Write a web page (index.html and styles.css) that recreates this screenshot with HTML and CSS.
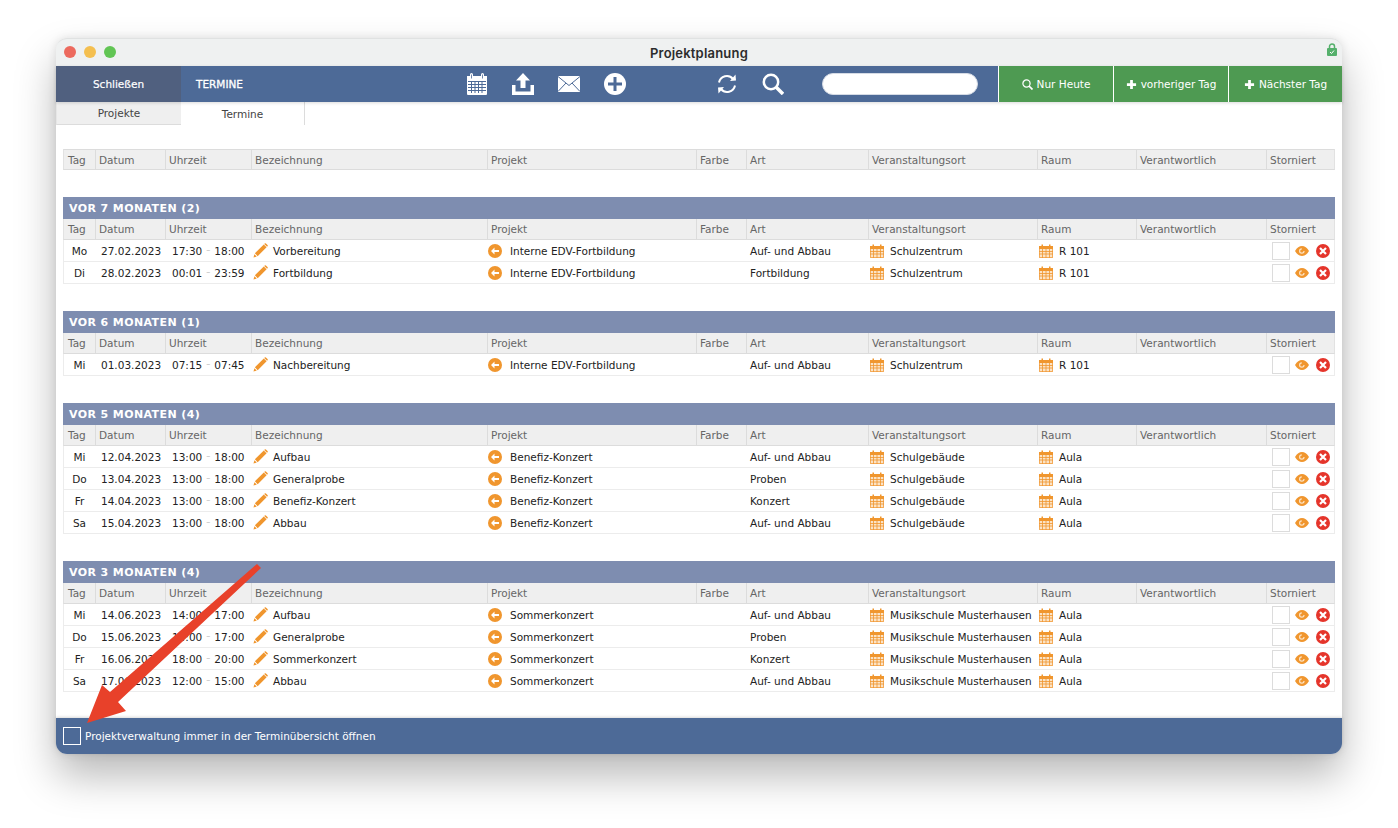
FILE: index.html
```html
<!DOCTYPE html>
<html lang="de">
<head>
<meta charset="utf-8">
<title>Projektplanung</title>
<link rel="stylesheet" href="styles.css">
</head>
<body>
<svg class="defs" width="0" height="0" aria-hidden="true">
  <symbol id="i-cal" viewBox="0 0 22 22">
    <path fill="currentColor" d="M1 3h3V1.5a1.5 1.5 0 0 1 3 0V3h8V1.500a1.500 1.500 0 0 1 3 0V3h3v18a1 1 0 0 1-1 1H2a1 1 0 0 1-1-1z"/>
    <path fill="none" stroke="#4d6a97" d="M5.500 1.500v4M16.500 1.500v4" stroke-width=".8"/>
    <path fill="none" stroke="#4d6a97" stroke-width="1" d="M2 8.500h18M2 11.500h18M2 14.500h18M2 17.500h18M5.500 8v12M9 8v12M12.500 8v12M16 8v12"/>
  </symbol>
  <symbol id="i-upload" viewBox="0 0 22 22">
    <path fill="#fff" d="M11 0l7 7.500h-4.500V15h-5V7.500H4zM0 12h3.500v6.500h15V12H22v10H0z"/>
  </symbol>
  <symbol id="i-mail" viewBox="0 0 22 16">
    <path fill="#fff" d="M0 0h22v16H0z"/>
    <path fill="none" stroke="#4d6a97" d="M0 .5l11 9 11-9M0 15.500l8-8.500M22 15.500l-8-8.500"/>
  </symbol>
  <symbol id="i-plus" viewBox="0 0 22 22">
    <circle cx="11" cy="11" r="11" fill="#fff"/>
    <path fill="none" stroke="#4d6a97" stroke-width="3" d="M11 4v14M4 11h14"/>
  </symbol>
  <symbol id="i-sync" viewBox="0 0 22 22">
    <path fill="none" stroke="#fff" stroke-width="2" d="M3 9.500a8 8 0 0 1 14-3.500M19 12.500a8 8 0 0 1-14 3.500"/>
    <path fill="#fff" d="M14 8l6-.5L19.500 1.500zM8 14l-6 .5.5 6z"/>
  </symbol>
  <symbol id="i-search" viewBox="0 0 22 22">
    <circle cx="9" cy="9" r="7.200" fill="none" stroke="currentColor" stroke-width="2.500"/>
    <path stroke="currentColor" stroke-width="3.500" d="M14 14l7 7"/>
  </symbol>
  <symbol id="i-cross" viewBox="0 0 12 12">
    <path fill="none" stroke="#fff" stroke-width="3" d="M6 1v10M1 6h10"/>
  </symbol>
  <symbol id="i-pen" viewBox="0 0 16 16">
    <path fill="#f0962e" d="M11.500 1.500l3 3L5 14l-3-3zM12.500.5a1 1 0 0 1 1.300 0l1.700 1.700a1 1 0 0 1 0 1.300l-.5.500-3-3zM1.500 12l2.500 2.500-3.500 1z"/>
  </symbol>
  <symbol id="i-back" viewBox="0 0 14 14">
    <circle cx="7" cy="7" r="7" fill="#f0962e"/>
    <path fill="#fff" d="M3 7l3.500-3.500V6H11v2H6.500v2.500z"/>
  </symbol>
  <symbol id="i-ocal" viewBox="0 0 14 14">
    <path fill="#fbe3c6" d="M0 3h14v11H0z"/>
    <path fill="#f0962e" d="M0 2h2.500V.5h1.500V2h6V.5h1.500V2H14v3H0z"/>
    <path fill="none" stroke="#f0962e" stroke-width=".8" d="M.4 5v8.600h13.200V5M0 7.500h14M0 10h14M3.500 5v9M7 5v9M10.500 5v9"/>
  </symbol>
  <symbol id="i-eye" viewBox="0 0 14 10">
    <path fill="#f0962e" d="M0 5c2-3.300 4.300-5 7-5s5 1.700 7 5c-2 3.300-4.300 5-7 5S2 8.300 0 5z"/>
    <path fill="none" stroke="#fbe3c6" stroke-width="1.200" d="M9 5a2.200 2.200 0 1 1-2.200-2.200"/>
  </symbol>
  <symbol id="i-x" viewBox="0 0 14 14">
    <circle cx="7" cy="7" r="7" fill="#e5352b"/>
    <path fill="none" stroke="#fff" stroke-width="2.200" d="M4 4l6 6M10 4l-6 6"/>
  </symbol>
</svg>

<div class="window">
  <header class="titlebar">
    <span class="lights"><i class="light red"></i><i class="light yellow"></i><i class="light green"></i></span>
    <span class="wintitle">Projektplanung</span>
    <svg class="lock" viewBox="0 0 10 13"><path fill="none" stroke="#55b06c" stroke-width="1.500" d="M2.500 6V3.500a2.500 2.500 0 0 1 5 0V6"/><rect y="5" width="10" height="8" rx="1" fill="#55b06c"/><path fill="none" stroke="#fff" d="M3 9l1.500 1.500L7 7.500"/></svg>
  </header>

  <nav class="toolbar">
    <a class="close-btn">Schließen</a>
    <span class="section">TERMINE</span>
    <span class="tools tools-a">
      <svg class="ti white"><use href="#i-cal"/></svg>
      <svg class="ti"><use href="#i-upload"/></svg>
      <svg class="ti"><use href="#i-mail"/></svg>
      <svg class="ti"><use href="#i-plus"/></svg>
    </span>
    <span class="tools tools-b">
      <svg class="ti"><use href="#i-sync"/></svg>
      <svg class="ti white"><use href="#i-search"/></svg>
    </span>
    <input class="search" type="text" aria-label="Suche">
    <span class="gbtns">
      <a class="gbtn g1"><svg class="gi"><use href="#i-search"/></svg>Nur Heute</a>
      <a class="gbtn g2"><svg class="gi"><use href="#i-cross"/></svg>vorheriger Tag</a>
      <a class="gbtn g3"><svg class="gi"><use href="#i-cross"/></svg>Nächster Tag</a>
    </span>
  </nav>

  <div class="tabs">
    <a class="tab off">Projekte</a>
    <a class="tab on">Termine</a>
  </div>

  <main class="content">
    <div class="row head top"><span>Tag</span><span>Datum</span><span>Uhrzeit</span><span>Bezeichnung</span><span>Projekt</span><span>Farbe</span><span>Art</span><span>Veranstaltungsort</span><span>Raum</span><span>Verantwortlich</span><span>Storniert</span></div>

    <section class="group">
      <h2 class="gtitle">VOR 7 MONATEN (2)</h2>
      <div class="row head"><span>Tag</span><span>Datum</span><span>Uhrzeit</span><span>Bezeichnung</span><span>Projekt</span><span>Farbe</span><span>Art</span><span>Veranstaltungsort</span><span>Raum</span><span>Verantwortlich</span><span>Storniert</span></div>
      <div class="row item"><span class="c-day">Mo</span><span class="c-date">27.02.2023</span><span class="c-time">17:30<em>–</em>18:00</span><span class="c-ic"><svg class="pen"><use href="#i-pen"/></svg>Vorbereitung</span><span class="c-proj"><svg class="back"><use href="#i-back"/></svg>Interne EDV-Fortbildung</span><span></span><span>Auf- und Abbau</span><span class="c-cal"><svg class="ocal"><use href="#i-ocal"/></svg>Schulzentrum</span><span class="c-cal"><svg class="ocal"><use href="#i-ocal"/></svg>R 101</span><span></span><span class="c-act"><i class="box"></i><svg class="eye"><use href="#i-eye"/></svg><svg class="x"><use href="#i-x"/></svg></span></div>
      <div class="row item"><span class="c-day">Di</span><span class="c-date">28.02.2023</span><span class="c-time">00:01<em>–</em>23:59</span><span class="c-ic"><svg class="pen"><use href="#i-pen"/></svg>Fortbildung</span><span class="c-proj"><svg class="back"><use href="#i-back"/></svg>Interne EDV-Fortbildung</span><span></span><span>Fortbildung</span><span class="c-cal"><svg class="ocal"><use href="#i-ocal"/></svg>Schulzentrum</span><span class="c-cal"><svg class="ocal"><use href="#i-ocal"/></svg>R 101</span><span></span><span class="c-act"><i class="box"></i><svg class="eye"><use href="#i-eye"/></svg><svg class="x"><use href="#i-x"/></svg></span></div>
    </section>

    <section class="group">
      <h2 class="gtitle">VOR 6 MONATEN (1)</h2>
      <div class="row head"><span>Tag</span><span>Datum</span><span>Uhrzeit</span><span>Bezeichnung</span><span>Projekt</span><span>Farbe</span><span>Art</span><span>Veranstaltungsort</span><span>Raum</span><span>Verantwortlich</span><span>Storniert</span></div>
      <div class="row item"><span class="c-day">Mi</span><span class="c-date">01.03.2023</span><span class="c-time">07:15<em>–</em>07:45</span><span class="c-ic"><svg class="pen"><use href="#i-pen"/></svg>Nachbereitung</span><span class="c-proj"><svg class="back"><use href="#i-back"/></svg>Interne EDV-Fortbildung</span><span></span><span>Auf- und Abbau</span><span class="c-cal"><svg class="ocal"><use href="#i-ocal"/></svg>Schulzentrum</span><span class="c-cal"><svg class="ocal"><use href="#i-ocal"/></svg>R 101</span><span></span><span class="c-act"><i class="box"></i><svg class="eye"><use href="#i-eye"/></svg><svg class="x"><use href="#i-x"/></svg></span></div>
    </section>

    <section class="group">
      <h2 class="gtitle">VOR 5 MONATEN (4)</h2>
      <div class="row head"><span>Tag</span><span>Datum</span><span>Uhrzeit</span><span>Bezeichnung</span><span>Projekt</span><span>Farbe</span><span>Art</span><span>Veranstaltungsort</span><span>Raum</span><span>Verantwortlich</span><span>Storniert</span></div>
      <div class="row item"><span class="c-day">Mi</span><span class="c-date">12.04.2023</span><span class="c-time">13:00<em>–</em>18:00</span><span class="c-ic"><svg class="pen"><use href="#i-pen"/></svg>Aufbau</span><span class="c-proj"><svg class="back"><use href="#i-back"/></svg>Benefiz-Konzert</span><span></span><span>Auf- und Abbau</span><span class="c-cal"><svg class="ocal"><use href="#i-ocal"/></svg>Schulgebäude</span><span class="c-cal"><svg class="ocal"><use href="#i-ocal"/></svg>Aula</span><span></span><span class="c-act"><i class="box"></i><svg class="eye"><use href="#i-eye"/></svg><svg class="x"><use href="#i-x"/></svg></span></div>
      <div class="row item"><span class="c-day">Do</span><span class="c-date">13.04.2023</span><span class="c-time">13:00<em>–</em>18:00</span><span class="c-ic"><svg class="pen"><use href="#i-pen"/></svg>Generalprobe</span><span class="c-proj"><svg class="back"><use href="#i-back"/></svg>Benefiz-Konzert</span><span></span><span>Proben</span><span class="c-cal"><svg class="ocal"><use href="#i-ocal"/></svg>Schulgebäude</span><span class="c-cal"><svg class="ocal"><use href="#i-ocal"/></svg>Aula</span><span></span><span class="c-act"><i class="box"></i><svg class="eye"><use href="#i-eye"/></svg><svg class="x"><use href="#i-x"/></svg></span></div>
      <div class="row item"><span class="c-day">Fr</span><span class="c-date">14.04.2023</span><span class="c-time">13:00<em>–</em>18:00</span><span class="c-ic"><svg class="pen"><use href="#i-pen"/></svg>Benefiz-Konzert</span><span class="c-proj"><svg class="back"><use href="#i-back"/></svg>Benefiz-Konzert</span><span></span><span>Konzert</span><span class="c-cal"><svg class="ocal"><use href="#i-ocal"/></svg>Schulgebäude</span><span class="c-cal"><svg class="ocal"><use href="#i-ocal"/></svg>Aula</span><span></span><span class="c-act"><i class="box"></i><svg class="eye"><use href="#i-eye"/></svg><svg class="x"><use href="#i-x"/></svg></span></div>
      <div class="row item"><span class="c-day">Sa</span><span class="c-date">15.04.2023</span><span class="c-time">13:00<em>–</em>18:00</span><span class="c-ic"><svg class="pen"><use href="#i-pen"/></svg>Abbau</span><span class="c-proj"><svg class="back"><use href="#i-back"/></svg>Benefiz-Konzert</span><span></span><span>Auf- und Abbau</span><span class="c-cal"><svg class="ocal"><use href="#i-ocal"/></svg>Schulgebäude</span><span class="c-cal"><svg class="ocal"><use href="#i-ocal"/></svg>Aula</span><span></span><span class="c-act"><i class="box"></i><svg class="eye"><use href="#i-eye"/></svg><svg class="x"><use href="#i-x"/></svg></span></div>
    </section>

    <section class="group">
      <h2 class="gtitle">VOR 3 MONATEN (4)</h2>
      <div class="row head"><span>Tag</span><span>Datum</span><span>Uhrzeit</span><span>Bezeichnung</span><span>Projekt</span><span>Farbe</span><span>Art</span><span>Veranstaltungsort</span><span>Raum</span><span>Verantwortlich</span><span>Storniert</span></div>
      <div class="row item"><span class="c-day">Mi</span><span class="c-date">14.06.2023</span><span class="c-time">14:00<em>–</em>17:00</span><span class="c-ic"><svg class="pen"><use href="#i-pen"/></svg>Aufbau</span><span class="c-proj"><svg class="back"><use href="#i-back"/></svg>Sommerkonzert</span><span></span><span>Auf- und Abbau</span><span class="c-cal"><svg class="ocal"><use href="#i-ocal"/></svg>Musikschule Musterhausen</span><span class="c-cal"><svg class="ocal"><use href="#i-ocal"/></svg>Aula</span><span></span><span class="c-act"><i class="box"></i><svg class="eye"><use href="#i-eye"/></svg><svg class="x"><use href="#i-x"/></svg></span></div>
      <div class="row item"><span class="c-day">Do</span><span class="c-date">15.06.2023</span><span class="c-time">14:00<em>–</em>17:00</span><span class="c-ic"><svg class="pen"><use href="#i-pen"/></svg>Generalprobe</span><span class="c-proj"><svg class="back"><use href="#i-back"/></svg>Sommerkonzert</span><span></span><span>Proben</span><span class="c-cal"><svg class="ocal"><use href="#i-ocal"/></svg>Musikschule Musterhausen</span><span class="c-cal"><svg class="ocal"><use href="#i-ocal"/></svg>Aula</span><span></span><span class="c-act"><i class="box"></i><svg class="eye"><use href="#i-eye"/></svg><svg class="x"><use href="#i-x"/></svg></span></div>
      <div class="row item"><span class="c-day">Fr</span><span class="c-date">16.06.2023</span><span class="c-time">18:00<em>–</em>20:00</span><span class="c-ic"><svg class="pen"><use href="#i-pen"/></svg>Sommerkonzert</span><span class="c-proj"><svg class="back"><use href="#i-back"/></svg>Sommerkonzert</span><span></span><span>Konzert</span><span class="c-cal"><svg class="ocal"><use href="#i-ocal"/></svg>Musikschule Musterhausen</span><span class="c-cal"><svg class="ocal"><use href="#i-ocal"/></svg>Aula</span><span></span><span class="c-act"><i class="box"></i><svg class="eye"><use href="#i-eye"/></svg><svg class="x"><use href="#i-x"/></svg></span></div>
      <div class="row item"><span class="c-day">Sa</span><span class="c-date">17.06.2023</span><span class="c-time">12:00<em>–</em>15:00</span><span class="c-ic"><svg class="pen"><use href="#i-pen"/></svg>Abbau</span><span class="c-proj"><svg class="back"><use href="#i-back"/></svg>Sommerkonzert</span><span></span><span>Auf- und Abbau</span><span class="c-cal"><svg class="ocal"><use href="#i-ocal"/></svg>Musikschule Musterhausen</span><span class="c-cal"><svg class="ocal"><use href="#i-ocal"/></svg>Aula</span><span></span><span class="c-act"><i class="box"></i><svg class="eye"><use href="#i-eye"/></svg><svg class="x"><use href="#i-x"/></svg></span></div>
    </section>
  </main>

  <footer class="footer">
    <i class="fbox"></i>
    <span class="ftext">Projektverwaltung immer in der Terminübersicht öffnen</span>
  </footer>
</div>

<svg class="arrow" viewBox="0 0 1398 828" aria-hidden="true">
  <polygon points="257,564 261,568 118,702 126,711 87,723 102,685 110,692" fill="#e8412a"/>
</svg>
</body>
</html>
```

FILE: styles.css
```css
* { box-sizing: border-box; }
html, body { margin: 0; height: 100%; }
body {
  background: #fff;
  font-family: "DejaVu Sans", "Liberation Sans", sans-serif;
  font-size: 10.5px;
  color: #222;
  overflow: hidden;
  position: relative;
}
.defs { position: absolute; }
.window {
  position: absolute;
  left: 56px;
  top: 38px;
  width: 1286px;
  height: 716px;
  display: flex;
  flex-direction: column;
  border-radius: 11px;
  background: #fff;
  box-shadow: 0 22px 42px rgba(0, 0, 0, .28), 0 0 10px rgba(0, 0, 0, .1);
}

/* title bar */
.titlebar {
  height: 28px;
  flex: none;
  display: flex;
  align-items: center;
  justify-content: center;
  position: relative;
  background: #eff1f1;
  border-radius: 11px 11px 0 0;
  border-top: 1px solid #e0e2e2;
}
.lights { position: absolute; left: 8px; top: 7px; display: flex; gap: 8px; }
.light { width: 12px; height: 12px; border-radius: 50%; display: block; }
.light.red { background: #ec6a5e; }
.light.yellow { background: #f4bf4f; }
.light.green { background: #61c554; }
.wintitle {
  font-family: Inter, "Liberation Sans", sans-serif;
  font-size: 13px;
  font-weight: 600;
  color: #2c2c2c;
  letter-spacing: .2px;
}
.lock { position: absolute; right: 5px; top: 4px; width: 10px; height: 13px; }

/* toolbar */
.toolbar {
  height: 36px;
  flex: none;
  display: flex;
  align-items: center;
  background: #4d6a97;
  color: #fff;
  position: relative;
  box-shadow: 0 1px 3px rgba(0, 0, 0, .15);
  z-index: 1;
}
.close-btn {
  width: 125px;
  height: 100%;
  display: flex;
  align-items: center;
  justify-content: center;
  background: #50607f;
  font-size: 10.500px;
  -webkit-text-stroke: .2px #fff;
}
.section { margin-left: 15px; width: 270px; font-size: 10.500px; -webkit-text-stroke: .3px #fff; }
.tools { display: flex; gap: 24px; }
.tools-b { margin-left: 90px; }
.ti { width: 22px; height: 22px; display: block; }
.ti.white { color: #fff; }
.search {
  margin-left: 38px;
  width: 156px;
  height: 22px;
  border-radius: 11px;
  border: 1px solid #d5dbe5;
  background: #fff;
  padding: 0 8px;
}
.gbtns { margin-left: 20px; height: 100%; display: flex; flex: 1; }
.gbtn {
  height: 100%;
  display: flex;
  align-items: center;
  justify-content: center;
  gap: 4px;
  background: #4e9a52;
  border-left: 1px solid #fff;
  font-size: 10.500px;
}
.g1 { width: 115px; }
.g2 { width: 115px; }
.g3 { flex: 1; }
.gi { width: 11px; height: 11px; color: #fff; }

/* tabs */
.tabs { height: 23px; flex: none; display: flex; }
.tab {
  height: 100%;
  display: flex;
  align-items: center;
  justify-content: center;
  color: #444;
  font-size: 10.500px;
}
.tab.off { width: 125px; background: #efefef; border-bottom: 1px solid #dcdcdc; border-left: 1px solid #e6e6e6; }
.tab.on { width: 124px; border-right: 1px solid #dcdcdc; }

/* table */
.content { flex: 1; padding: 24px 7px 0; min-height: 0; }
.row {
  display: grid;
  grid-template-columns: 31px 70px 86px 236px 209px 50px 122px 169px 99px 130px 70px;
  align-items: center;
}
.row.head { height: 21px; background: #efefef; color: #666; border-bottom: 1px solid #dcdcdc; border-left: 1px solid #e2e2e2; border-right: 1px solid #e2e2e2; }
.row.head.top { border-top: 1px solid #dcdcdc; }
.row.head span { height: 100%; display: flex; align-items: center; padding-left: 3px; border-left: 1px solid #dcdcdc; }
.row.head span:first-child { border-left: 0; padding-left: 4px; }
.group { margin-top: 27px; }
.gtitle {
  margin: 0;
  height: 22px;
  display: flex;
  align-items: center;
  padding-left: 6px;
  background: #7e8db0;
  color: #fff;
  font-size: 11px;
  font-weight: 700;
  letter-spacing: .4px;
}
.row.item { height: 22px; border-bottom: 1px solid #ececec; border-left: 1px solid #ececec; border-right: 1px solid #ececec; }
.row.item > span { display: flex; align-items: center; height: 100%; padding-left: 4px; white-space: nowrap; }
.row.item > .c-day { padding-left: 0; justify-content: center; }
.row.item > .c-date { padding-left: 6px; }
.row.item > .c-time { padding-left: 7px; }
.c-time em { font-style: normal; color: #bbb; margin: 0 4px; font-size: 8px; }
.row.item > .c-ic { padding-left: 2px; }
.pen { width: 15px; height: 15px; margin-right: 5px; }
.row.item > .c-proj { padding-left: 1px; }
.back { width: 14px; height: 14px; margin-right: 8px; }
.row.item > .c-cal { padding-left: 2px; }
.ocal { width: 14px; height: 14px; margin-right: 6px; }
.row.item > .c-act { padding-left: 6px; }
.box { width: 18px; height: 18px; border: 1px solid #dcdcdc; background: #fff; display: block; }
.eye { width: 14px; height: 10px; margin-left: 5px; }
.x { width: 14px; height: 14px; margin-left: 7px; }

/* footer */
.footer {
  height: 36px;
  flex: none;
  display: flex;
  align-items: center;
  padding-left: 7px;
  background: #4d6a97;
  color: #fff;
  border-radius: 0 0 11px 11px;
  box-shadow: 0 -1px 3px rgba(0, 0, 0, .15);
}
.fbox { width: 18px; height: 18px; border: 1px solid #fff; display: block; margin-right: 4px; }
.ftext { font-size: 10.500px; }

/* annotation */
.arrow { position: absolute; left: 0; top: 0; width: 1398px; height: 828px; pointer-events: none; }
```
